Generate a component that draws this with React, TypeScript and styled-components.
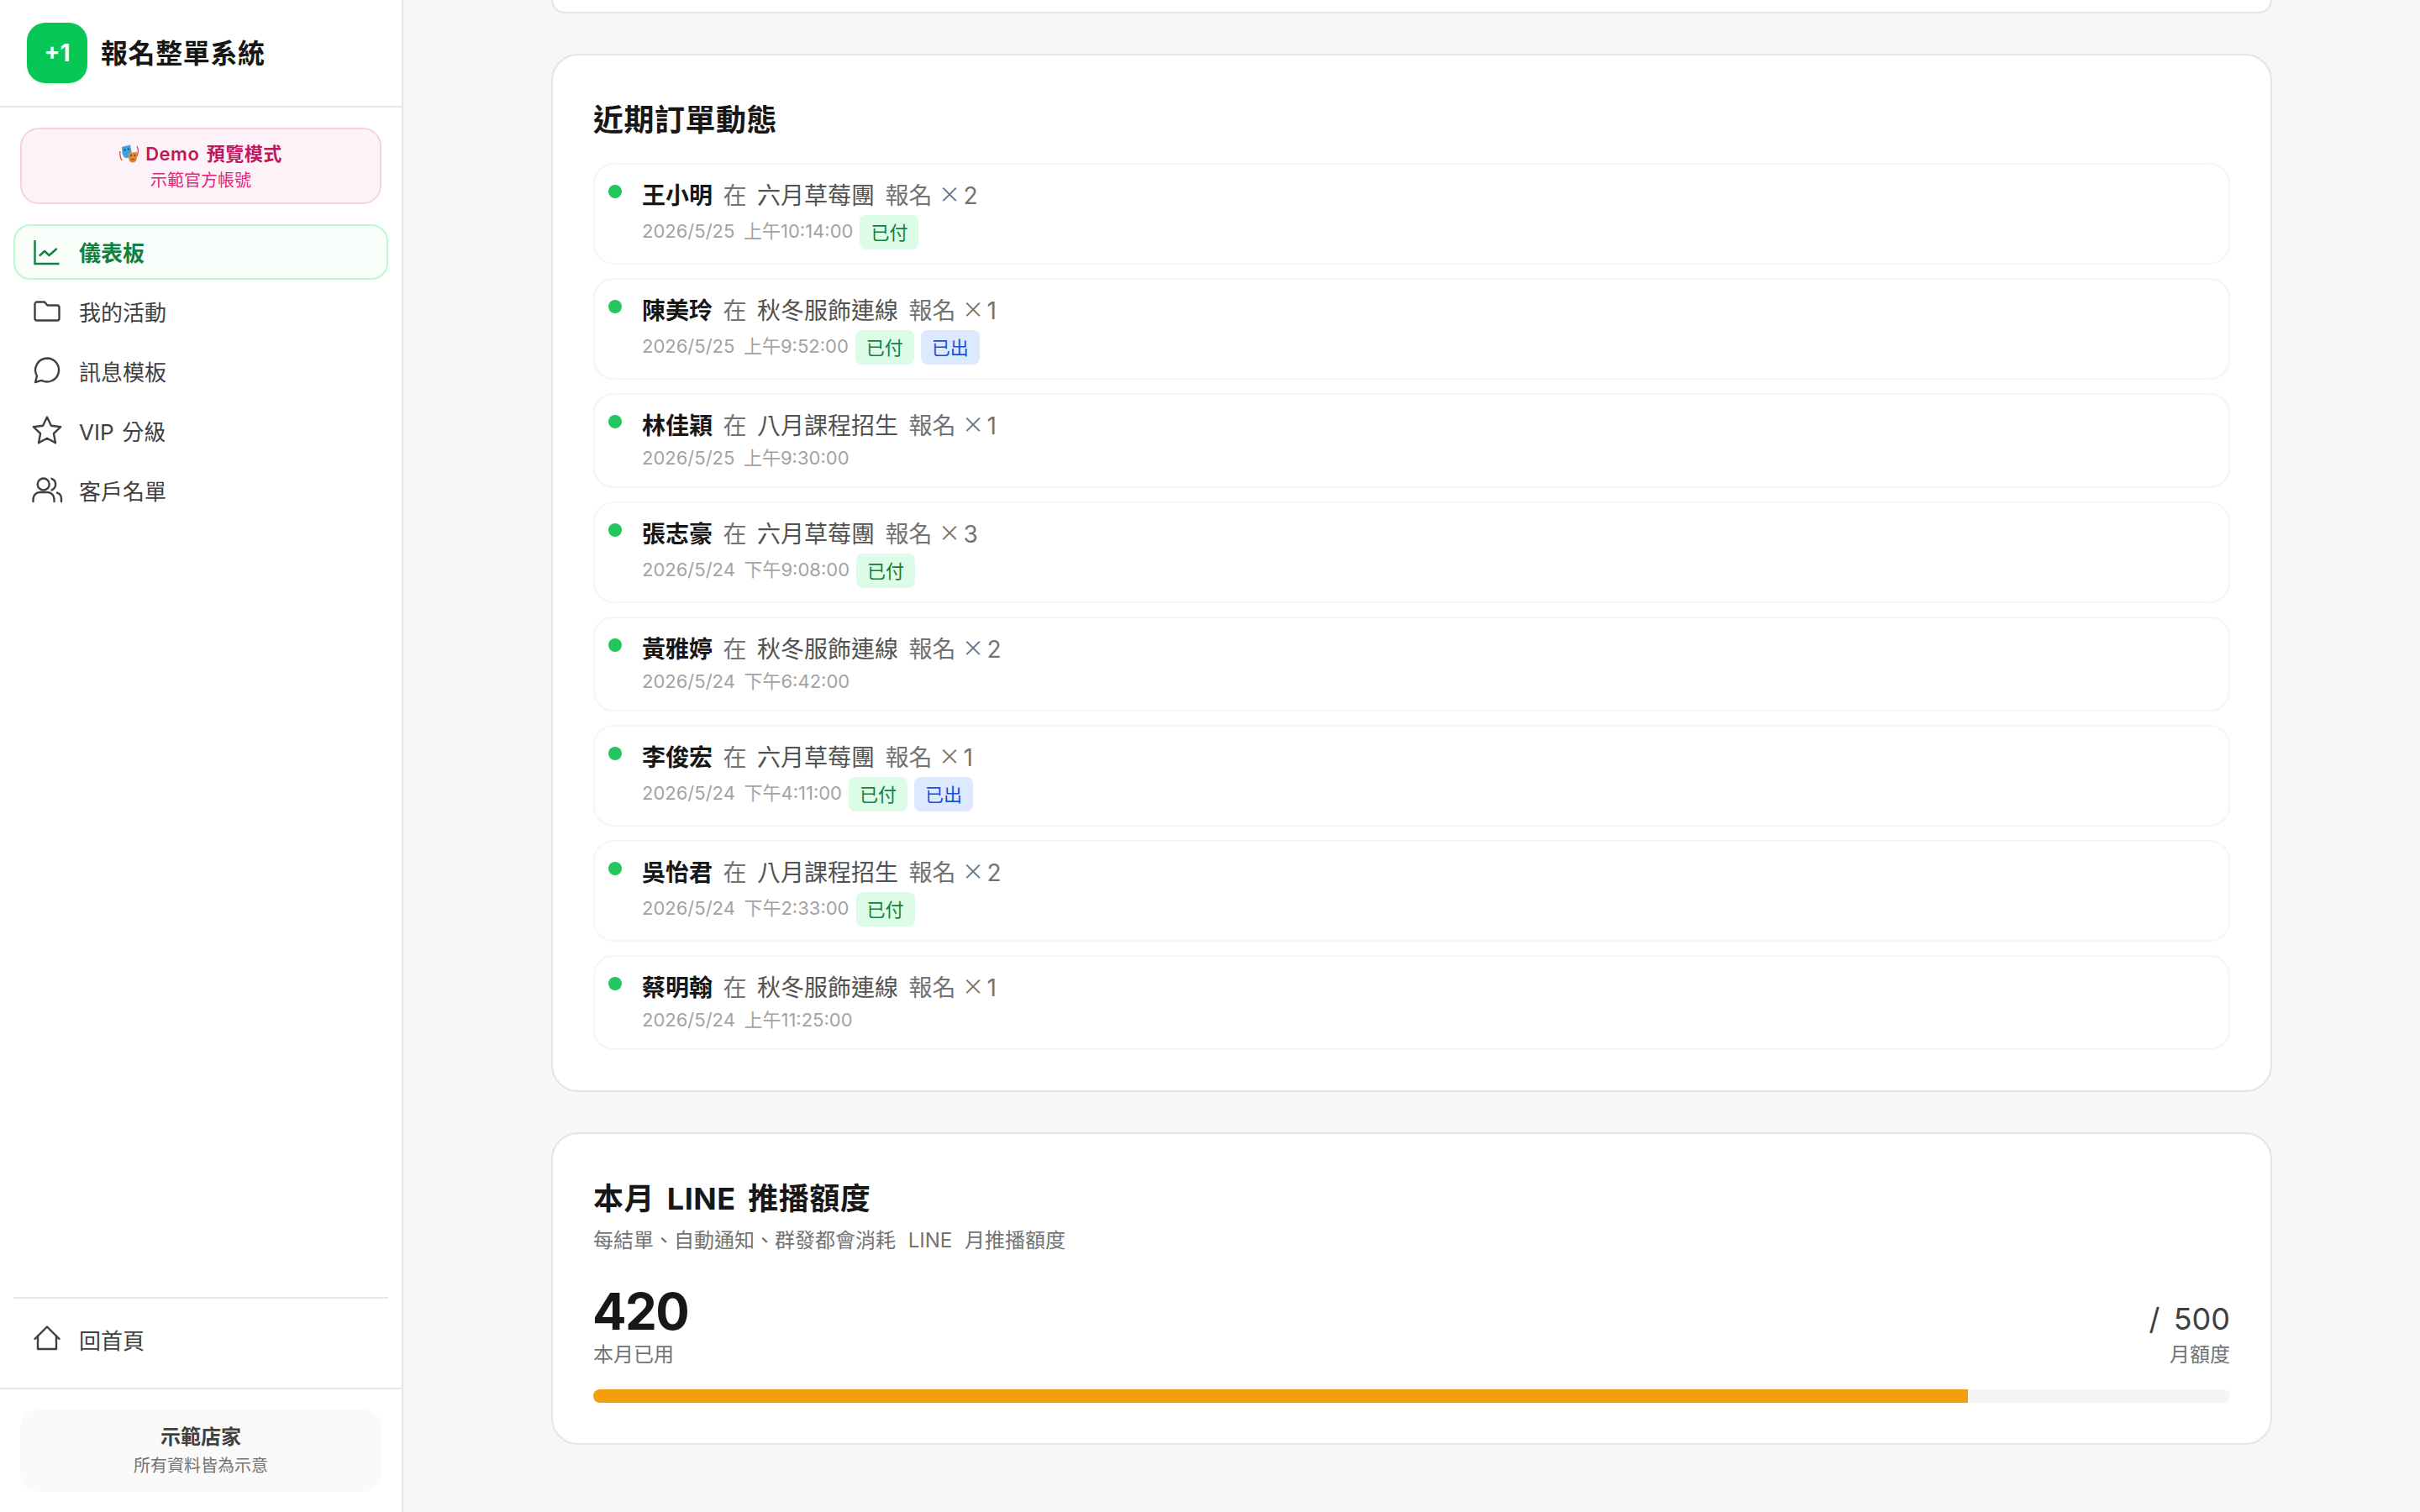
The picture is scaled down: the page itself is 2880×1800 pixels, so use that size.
import React from 'react';
import styled, { createGlobalStyle } from 'styled-components';

const GlobalStyle = createGlobalStyle`
  html, body {
    margin: 0;
    padding: 0;
    background: #f7f7f7;
  }
  body {
    font-family: Inter, "Noto Sans CJK TC", "Noto Sans", sans-serif;
    color: #171717;
    word-spacing: 0.15em;
  }
  * {
    box-sizing: border-box;
  }
`;

const Layout = styled.div`
  display: flex;
  height: 1800px;
  overflow: hidden;
`;

const Sidebar = styled.aside`
  width: 480px;
  flex-shrink: 0;
  display: flex;
  flex-direction: column;
  background: #fff;
  border-right: 2px solid #e5e5e5;
`;

const Brand = styled.div`
  height: 128px;
  flex-shrink: 0;
  display: flex;
  align-items: center;
  gap: 16px;
  padding: 0 32px;
  border-bottom: 2px solid #e5e5e5;
`;

const Logo = styled.div`
  width: 72px;
  height: 72px;
  border-radius: 22px;
  background: #06c755;
  color: #fff;
  font-size: 28px;
  font-weight: 700;
  display: flex;
  align-items: center;
  justify-content: center;
  box-shadow: 0 2px 4px rgba(0, 0, 0, 0.06);
`;

const BrandName = styled.div`
  padding-bottom: 4px;
  font-size: 32px;
  font-weight: 700;
  letter-spacing: 0.6px;
  color: #171717;
`;

const DemoBox = styled.div`
  margin: 24px 24px;
  height: 91px;
  border: 2px solid #fbcfe8;
  border-radius: 22px;
  background: #fdf2f8;
  display: flex;
  flex-direction: column;
  align-items: center;
  justify-content: center;
`;

const DemoTitle = styled.div`
  display: flex;
  align-items: center;
  gap: 8px;
  padding-bottom: 2px;
  font-size: 22px;
  line-height: 32px;
  font-weight: 600;
  letter-spacing: 0.5px;
  color: #be185d;
`;

const DemoSub = styled.div`
  font-size: 20px;
  line-height: 28px;
  color: #db2777;
`;

const Nav = styled.nav`
  flex: 1;
  display: flex;
  flex-direction: column;
  gap: 5px;
  padding: 0 16px;
`;

const NavItem = styled.div<{ $active?: boolean }>`
  height: 66px;
  display: flex;
  align-items: center;
  gap: 18px;
  padding: 0 18px 2px;
  border: 2px solid ${props => (props.$active ? '#bbf7d0' : 'transparent')};
  border-radius: 20px;
  background: ${props => (props.$active ? '#f9fefb' : 'transparent')};
  color: ${props => (props.$active ? '#15803d' : '#404040')};
  font-size: 26px;
  font-weight: ${props => (props.$active ? 700 : 400)};
`;

const NavIcon = styled.svg`
  width: 40px;
  height: 40px;
  flex-shrink: 0;
  fill: none;
  stroke: currentColor;
  stroke-width: 2.4;
  stroke-linecap: round;
  stroke-linejoin: round;
`;

const BottomNav = styled.div`
  margin: 0 16px;
  padding: 16px 0 24px;
  border-top: 2px solid #e5e5e5;
`;

const StoreFooter = styled.div`
  padding: 24px;
  border-top: 2px solid #e5e5e5;
`;

const StoreBox = styled.div`
  height: 98px;
  border-radius: 22px;
  background: #fafafa;
  display: flex;
  flex-direction: column;
  align-items: center;
  justify-content: center;
`;

const StoreName = styled.div`
  padding-bottom: 2px;
  font-size: 24px;
  line-height: 34px;
  font-weight: 700;
  color: #404040;
`;

const StoreNote = styled.div`
  font-size: 20px;
  line-height: 30px;
  color: #737373;
`;

const Main = styled.main`
  flex: 1;
  display: flex;
  flex-direction: column;
  align-items: center;
  overflow: hidden;
`;

const Card = styled.section`
  width: 2048px;
  flex-shrink: 0;
  margin-bottom: 48px;
  padding: 48px;
  background: #fff;
  border: 2px solid #e5e5e5;
  border-radius: 32px;
`;

const ScrolledCardEnd = styled.div`
  width: 2048px;
  height: 16px;
  flex-shrink: 0;
  margin-bottom: 48px;
  background: #fff;
  border: 2px solid #e5e5e5;
  border-top: none;
  border-radius: 0 0 32px 32px;
`;

const CardTitle = styled.h2`
  margin: 0;
  padding-top: 3px;
  font-size: 36px;
  line-height: 53px;
  font-weight: 700;
  letter-spacing: 0.5px;
  word-spacing: 0.16em;
  color: #171717;
`;

const OrderList = styled.div`
  display: flex;
  flex-direction: column;
  gap: 16px;
  margin-top: 24px;
`;

const OrderRow = styled.div`
  display: flex;
  gap: 24px;
  padding: 16px;
  border: 2px solid #f5f5f5;
  border-radius: 24px;
`;

const Dot = styled.span`
  width: 16px;
  height: 16px;
  margin-top: 8px;
  flex-shrink: 0;
  border-radius: 50%;
  background: #22c55e;
`;

const OrderBody = styled.div`
  display: flex;
  flex-direction: column;
  gap: 2px;
`;

const OrderLine = styled.div`
  font-size: 28px;
  line-height: 42px;
  word-spacing: 0.165em;
  color: #737373;
`;

const CustomerName = styled.strong`
  font-weight: 700;
  color: #171717;
`;

const EventName = styled.span`
  color: #525252;
`;

const QtyMark = styled.span`
  margin: 0 -9px 0 -5px;
  font-family: "Noto Sans CJK TC", sans-serif;
  font-size: 26px;
  line-height: 0;
  vertical-align: 2px;
`;

const OrderMeta = styled.div`
  min-height: 33px;
  display: flex;
  align-items: center;
  gap: 8px;
`;

const OrderTime = styled.span`
  padding-bottom: 3px;
  font-size: 22px;
  line-height: 30px;
  word-spacing: 0.2em;
  color: #a3a3a3;
`;

const Tag = styled.span<{ $tone: 'paid' | 'shipped' }>`
  height: 41px;
  padding: 0 13px 4px;
  display: flex;
  align-items: center;
  border-radius: 8px;
  font-size: 22px;
  background: ${props => (props.$tone === 'paid' ? '#dcfce7' : '#dbeafe')};
  color: ${props => (props.$tone === 'paid' ? '#15803d' : '#1d4ed8')};
`;

const CardNote = styled.p`
  margin: 7px 0 0;
  font-size: 24px;
  line-height: 32px;
  word-spacing: 8px;
  color: #737373;
`;

const QuotaStats = styled.div`
  display: flex;
  justify-content: space-between;
  align-items: flex-end;
  margin-top: 32px;
`;

const QuotaUsed = styled.div`
  margin-left: -1px;
  font-size: 60px;
  line-height: 72px;
  font-weight: 700;
  letter-spacing: -1.5px;
  color: #171717;
`;

const QuotaLimit = styled.div`
  font-size: 36px;
  line-height: 54px;
  word-spacing: 6px;
  color: #404040;
  text-align: right;
`;

const QuotaLabel = styled.div<{ $right?: boolean }>`
  font-size: 24px;
  line-height: 32px;
  color: #737373;
  text-align: ${props => (props.$right ? 'right' : 'left')};
`;

const QuotaTrack = styled.div`
  height: 16px;
  margin-top: 25px;
  border-radius: 8px;
  background: #f5f5f5;
  overflow: hidden;
`;

const QuotaFill = styled.div`
  height: 100%;
  background: #f59e0b;
`;

const MasksSvg = styled.svg`
  width: 23px;
  height: 22px;
  flex-shrink: 0;
`;

const orders = [
  { name: '王小明', event: '六月草莓團', qty: 2, time: '2026/5/25 上午10:14:00', paid: true, shipped: false },
  { name: '陳美玲', event: '秋冬服飾連線', qty: 1, time: '2026/5/25 上午9:52:00', paid: true, shipped: true },
  { name: '林佳穎', event: '八月課程招生', qty: 1, time: '2026/5/25 上午9:30:00', paid: false, shipped: false },
  { name: '張志豪', event: '六月草莓團', qty: 3, time: '2026/5/24 下午9:08:00', paid: true, shipped: false },
  { name: '黃雅婷', event: '秋冬服飾連線', qty: 2, time: '2026/5/24 下午6:42:00', paid: false, shipped: false },
  { name: '李俊宏', event: '六月草莓團', qty: 1, time: '2026/5/24 下午4:11:00', paid: true, shipped: true },
  { name: '吳怡君', event: '八月課程招生', qty: 2, time: '2026/5/24 下午2:33:00', paid: true, shipped: false },
  { name: '蔡明翰', event: '秋冬服飾連線', qty: 1, time: '2026/5/24 上午11:25:00', paid: false, shipped: false },
];

const quota = { used: 420, limit: 500 };

const navIcons = {
  chart: (
    <>
      <path d="M5.5 7v28h29" strokeLinecap="butt" strokeLinejoin="miter" />
      <path d="M11.5 25l5.5-5 5.5 5 8.5-7.5" />
    </>
  ),
  folder: <path d="M5.5 12a2.5 2.5 0 0 1 2.5-2.5h9l3.5 4H32a2.5 2.5 0 0 1 2.5 2.5v13a2.5 2.5 0 0 1-2.5 2.5H8A2.5 2.5 0 0 1 5.5 29z" />,
  chat: <path d="M20 5.5a14 14 0 1 1-6.5 26.4L6 34l2-7.5A14 14 0 0 1 20 5.5z" />,
  star: <path d="M20 4.5l4.9 10.3 11.3 1.4-8.3 7.9 2.1 11.2-10-5.5-10 5.500 2.100-11.200-8.300-7.900 11.300-1.400z" />,
  users: (
    <>
      <circle cx="15.7" cy="13.5" r="7" />
      <path d="M3.5 34v-3a8 8 0 0 1 8-8h9a8 8 0 0 1 8 8v3" />
      <path d="M25.5 6.8a7.3 7.3 0 0 1 0 13.6" />
      <path d="M32 23.6a7.5 7.5 0 0 1 5 7.4v3" />
    </>
  ),
  home: (
    <>
      <path d="M5.5 20 20 5.5 34.5 20" />
      <path d="M9 16.5V32h22V16.5" />
    </>
  ),
};

type IconName = keyof typeof navIcons;

const navItems: { label: string; icon: IconName; active?: boolean }[] = [
  { label: '儀表板', icon: 'chart', active: true },
  { label: '我的活動', icon: 'folder' },
  { label: '訊息模板', icon: 'chat' },
  { label: 'VIP 分級', icon: 'star' },
  { label: '客戶名單', icon: 'users' },
];

const Masks = () => (
  <MasksSvg viewBox="0 0 23 22">
    <path d="M1 8C.5 12 1 16 3 19" fill="none" stroke="#d6452f" strokeWidth="1.2" />
    <path d="M21 2c1.500 3 1.500 8 0 12" fill="none" stroke="#d6452f" strokeWidth="1.2" />
    <path d="M3 3l10-2.500 1.500 8c.5 4-2 7-5 7.500S4 14 3.500 10z" fill="#3f9fe0" />
    <circle cx="6.500" cy="6.500" r="1" fill="#123a5c" />
    <circle cx="11" cy="5.500" r="1" fill="#123a5c" />
    <path d="M11 10l10-1v6c0 4-2 6.500-5 6.500S11 19 11 15z" fill="#e08a35" />
    <circle cx="14" cy="13" r="1" fill="#6b3510" />
    <circle cx="18.500" cy="13" r="1" fill="#6b3510" />
    <path d="M14 18.500c1.500-1.500 3-1.500 4.500 0" fill="none" stroke="#6b3510" strokeWidth="1" />
  </MasksSvg>
);

const App: React.FC = () => {
  return (
    <Layout>
      <GlobalStyle />
      <Sidebar>
        <Brand>
          <Logo>+1</Logo>
          <BrandName>報名整單系統</BrandName>
        </Brand>
        <DemoBox>
          <DemoTitle>
            <Masks />
            Demo 預覽模式
          </DemoTitle>
          <DemoSub>示範官方帳號</DemoSub>
        </DemoBox>
        <Nav>
          {navItems.map(item => (
            <NavItem key={item.label} $active={item.active}>
              <NavIcon viewBox="0 0 40 40">{navIcons[item.icon]}</NavIcon>
              {item.label}
            </NavItem>
          ))}
        </Nav>
        <BottomNav>
          <NavItem>
            <NavIcon viewBox="0 0 40 40">{navIcons.home}</NavIcon>
            回首頁
          </NavItem>
        </BottomNav>
        <StoreFooter>
          <StoreBox>
            <StoreName>示範店家</StoreName>
            <StoreNote>所有資料皆為示意</StoreNote>
          </StoreBox>
        </StoreFooter>
      </Sidebar>

      <Main>
        <ScrolledCardEnd />

        <Card>
          <CardTitle>近期訂單動態</CardTitle>
          <OrderList>
            {orders.map(order => (
              <OrderRow key={order.name}>
                <Dot />
                <OrderBody>
                  <OrderLine>
                    <CustomerName>{order.name}</CustomerName> 在 <EventName>{order.event}</EventName> 報名 <QtyMark>×</QtyMark> {order.qty}
                  </OrderLine>
                  <OrderMeta>
                    <OrderTime>{order.time}</OrderTime>
                    {order.paid && <Tag $tone="paid">已付</Tag>}
                    {order.shipped && <Tag $tone="shipped">已出</Tag>}
                  </OrderMeta>
                </OrderBody>
              </OrderRow>
            ))}
          </OrderList>
        </Card>

        <Card>
          <CardTitle>本月 LINE 推播額度</CardTitle>
          <CardNote>每結單、自動通知、群發都會消耗 LINE 月推播額度</CardNote>
          <QuotaStats>
            <div>
              <QuotaUsed>{quota.used}</QuotaUsed>
              <QuotaLabel>本月已用</QuotaLabel>
            </div>
            <div>
              <QuotaLimit>/ {quota.limit}</QuotaLimit>
              <QuotaLabel $right>月額度</QuotaLabel>
            </div>
          </QuotaStats>
          <QuotaTrack>
            <QuotaFill style={{ width: `${(quota.used / quota.limit) * 100}%` }} />
          </QuotaTrack>
        </Card>
      </Main>
    </Layout>
  );
};

export default App;
